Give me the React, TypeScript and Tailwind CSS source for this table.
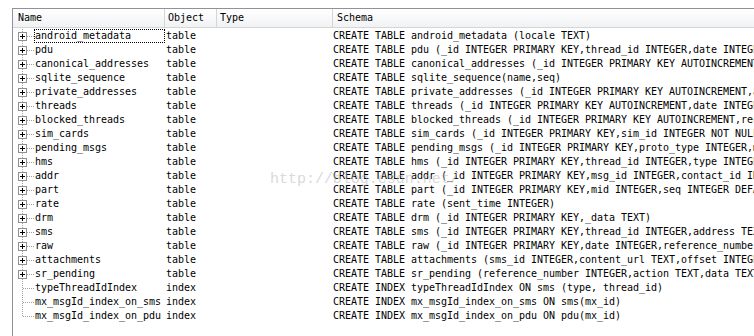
import React from "react";

type Row = { name: string; obj: string; schema: string; plus: boolean };

const rows: Row[] = [
  { name: "android_metadata", obj: "table", plus: true, schema: "CREATE TABLE android_metadata (locale TEXT)" },
  { name: "pdu", obj: "table", plus: true, schema: "CREATE TABLE pdu (_id INTEGER PRIMARY KEY,thread_id INTEGER,date INTEGER,date_sent INTEGER DEFAULT 0)" },
  { name: "canonical_addresses", obj: "table", plus: true, schema: "CREATE TABLE canonical_addresses (_id INTEGER PRIMARY KEY AUTOINCREMENT,address TEXT)" },
  { name: "sqlite_sequence", obj: "table", plus: true, schema: "CREATE TABLE sqlite_sequence(name,seq)" },
  { name: "private_addresses", obj: "table", plus: true, schema: "CREATE TABLE private_addresses (_id INTEGER PRIMARY KEY AUTOINCREMENT,address TEXT)" },
  { name: "threads", obj: "table", plus: true, schema: "CREATE TABLE threads (_id INTEGER PRIMARY KEY AUTOINCREMENT,date INTEGER DEFAULT 0)" },
  { name: "blocked_threads", obj: "table", plus: true, schema: "CREATE TABLE blocked_threads (_id INTEGER PRIMARY KEY AUTOINCREMENT,recipient_ids TEXT)" },
  { name: "sim_cards", obj: "table", plus: true, schema: "CREATE TABLE sim_cards (_id INTEGER PRIMARY KEY,sim_id INTEGER NOT NULL DEFAULT 0)" },
  { name: "pending_msgs", obj: "table", plus: true, schema: "CREATE TABLE pending_msgs (_id INTEGER PRIMARY KEY,proto_type INTEGER,msg_id INTEGER)" },
  { name: "hms", obj: "table", plus: true, schema: "CREATE TABLE hms (_id INTEGER PRIMARY KEY,thread_id INTEGER,type INTEGER,date INTEGER)" },
  { name: "addr", obj: "table", plus: true, schema: "CREATE TABLE addr (_id INTEGER PRIMARY KEY,msg_id INTEGER,contact_id INTEGER,address TEXT)" },
  { name: "part", obj: "table", plus: true, schema: "CREATE TABLE part (_id INTEGER PRIMARY KEY,mid INTEGER,seq INTEGER DEFAULT 0,ct TEXT)" },
  { name: "rate", obj: "table", plus: true, schema: "CREATE TABLE rate (sent_time INTEGER)" },
  { name: "drm", obj: "table", plus: true, schema: "CREATE TABLE drm (_id INTEGER PRIMARY KEY,_data TEXT)" },
  { name: "sms", obj: "table", plus: true, schema: "CREATE TABLE sms (_id INTEGER PRIMARY KEY,thread_id INTEGER,address TEXT,person INTEGER)" },
  { name: "raw", obj: "table", plus: true, schema: "CREATE TABLE raw (_id INTEGER PRIMARY KEY,date INTEGER,reference_number INTEGER)" },
  { name: "attachments", obj: "table", plus: true, schema: "CREATE TABLE attachments (sms_id INTEGER,content_url TEXT,offset INTEGER)" },
  { name: "sr_pending", obj: "table", plus: true, schema: "CREATE TABLE sr_pending (reference_number INTEGER,action TEXT,data TEXT)" },
  { name: "typeThreadIdIndex", obj: "index", plus: false, schema: "CREATE INDEX typeThreadIdIndex ON sms (type, thread_id)" },
  { name: "mx_msgId_index_on_sms", obj: "index", plus: false, schema: "CREATE INDEX mx_msgId_index_on_sms ON sms(mx_id)" },
  { name: "mx_msgId_index_on_pdu", obj: "index", plus: false, schema: "CREATE INDEX mx_msgId_index_on_pdu ON pdu(mx_id)" },
];

function Tree({ plus, last }: { plus: boolean; last: boolean }) {
  return (
    <svg width="21" height="14" viewBox="0 0 21 14" shapeRendering="crispEdges" className="block shrink-0">
      <line x1="9.5" y1="0" x2="9.5" y2={last ? 7 : 14} stroke="#a0a0a0" strokeDasharray="1 1" />
      <line x1={plus ? 14 : 10} y1="7.5" x2="21" y2="7.5" stroke="#a0a0a0" strokeDasharray="1 1" />
      {plus && (
        <g>
          <rect x="5.5" y="3.5" width="8" height="8" fill="#ffffff" stroke="#919191" />
          <line x1="7" y1="7.5" x2="12" y2="7.5" stroke="#000000" />
          <line x1="9.5" y1="5" x2="9.5" y2="10" stroke="#000000" />
        </g>
      )}
    </svg>
  );
}

export default function App() {
  return (
    <div
      className="relative w-[754px] h-[336px] overflow-hidden bg-white text-black text-[10px] tracking-[-0.02px]"
      style={{ fontFamily: '"DejaVu Sans Mono", "Liberation Mono", monospace' }}
    >
      <div className="mt-[8px] ml-[12px] h-[328px] border-t border-l border-[#8e939b] bg-white">
        <div className="flex h-[19px] border-b border-[#d5d5d5] bg-gradient-to-b from-[#ffffff] to-[#f1f2f4]">
          <div className="w-[152px] shrink-0 border-r border-[#d5d5d5] pl-[5px] leading-[18px]">Name</div>
          <div className="w-[52px] shrink-0 border-r border-[#d5d5d5] pl-[3px] leading-[18px]">Object</div>
          <div className="w-[116px] shrink-0 border-r border-[#d5d5d5] pl-[3px] leading-[18px]">Type</div>
          <div className="flex-1 pl-[4px] leading-[18px] whitespace-nowrap">Schema</div>
        </div>
        <div className="pt-[1px]">
          {rows.map((r, i) => (
            <div key={r.name} className="flex h-[14px] leading-[14px] whitespace-nowrap">
              <div className="flex w-[152px] shrink-0">
                <Tree plus={r.plus} last={i === rows.length - 1} />
                <div
                  className={
                    "h-[14px] w-[131px] border pl-[0px] leading-[12px] " +
                    (i === 0 ? "border-dotted border-[#000000]" : "border-transparent")
                  }
                >
                  {r.name}
                </div>
              </div>
              <div className="w-[52px] shrink-0 pl-[1px]">{r.obj}</div>
              <div className="w-[116px] shrink-0"></div>
              <div className="flex-1 overflow-hidden">{r.schema}</div>
            </div>
          ))}
        </div>
      </div>
      <div
        className="pointer-events-none absolute left-[270px] top-[171px] text-[15px] leading-[18px] text-[#b4b4b4] opacity-50 whitespace-nowrap"
        style={{ fontFamily: '"Liberation Mono", monospace' }}
      >
        http://blog.csdn.net/
      </div>
    </div>
  );
}
